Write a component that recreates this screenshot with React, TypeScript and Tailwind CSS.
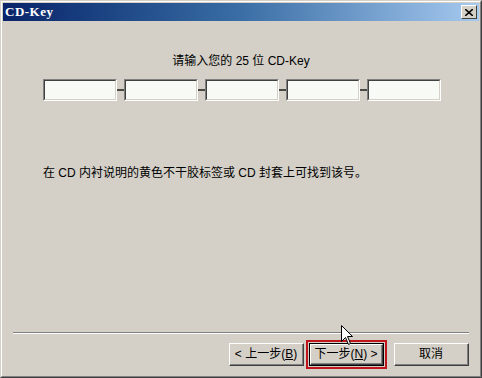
import React from "react";

const cjk = {
  fontFamily: '"Liberation Sans", "Noto Sans CJK SC", sans-serif',
};

const KeyBox = () => (
  <div className="w-[74px] h-[22px] border-t border-l border-[#808080] border-b border-r border-b-[#ffffff] border-r-[#ffffff]">
    <div className="w-full h-full border-t border-l border-[#404040] border-b border-r border-b-[#d4d0c8] border-r-[#d4d0c8] bg-[#f8faf6]" />
  </div>
);

const Dash = () => (
  <div className="w-[7px] flex items-center">
    <div className="w-full h-[2px] bg-[#4a4a44]" />
  </div>
);

type BtnProps = {
  children: React.ReactNode;
  isDefault?: boolean;
};

const Btn = ({ children, isDefault }: BtnProps) => (
  <div
    className={
      "w-[75px] h-[23px] " +
      (isDefault ? "border border-black" : "")
    }
  >
    <div className="w-full h-full border-t border-l border-white border-b border-r border-b-[#404040] border-r-[#404040] bg-[#d4d0c8]">
      <div
        className="w-full h-full border-b border-r border-[#808080] flex items-center justify-center text-[12px] text-black"
        style={cjk}
      >
        {children}
      </div>
    </div>
  </div>
);

const Cursor = () => (
  <svg
    className="absolute left-[340px] top-[324px]"
    width="13"
    height="21"
    viewBox="0 0 13 21"
  >
    <path
      d="M0.5 0.5 L0.5 16.5 L4.5 12.5 L7.5 19.5 L9.5 18.5 L6.5 11.5 L11.5 11.5 Z"
      fill="#ffffff"
      stroke="#000000"
      strokeWidth="1"
    />
  </svg>
);

export default function App() {
  return (
    <div className="relative w-[482px] h-[378px] bg-[#d4d0c8] border-t border-l border-[#d4d0c8] border-b border-r border-b-[#404040] border-r-[#404040]">
      <div className="w-full h-full border-t border-l border-white border-b border-r border-b-[#808080] border-r-[#808080] flex flex-col px-[1px] pt-[1px]">
        {/* title bar */}
        <div className="h-[18px] flex items-center justify-between pl-[2px] pr-[2px] bg-gradient-to-r from-[#0a246a] via-[#3a6ea5] to-[#a6caf0]">
          <span
            className="text-white font-bold text-[13px] tracking-[0.5px]"
            style={{ fontFamily: '"Liberation Serif", serif' }}
          >
            CD-Key
          </span>
          <div className="w-[16px] h-[14px] bg-[#d4d0c8] border-t border-l border-white border-b border-r border-b-[#404040] border-r-[#404040] flex items-center justify-center">
            <svg width="8" height="7" viewBox="0 0 8 7">
              <path d="M0 0 L8 7 M8 0 L0 7" stroke="#000" strokeWidth="1.6" />
            </svg>
          </div>
        </div>

        {/* body */}
        <div className="flex-1 flex flex-col">
          <div className="mt-[33px] text-center text-[12px] text-black leading-[14px]" style={cjk}>
            请输入您的 25 位 CD-Key
          </div>
          <div className="mt-[11px] ml-[40px] flex">
            <KeyBox />
            <Dash />
            <KeyBox />
            <Dash />
            <KeyBox />
            <Dash />
            <KeyBox />
            <Dash />
            <KeyBox />
          </div>
          <div className="mt-[65px] ml-[40px] text-[12px] text-black leading-[14px]" style={cjk}>
            在 CD 内衬说明的黄色不干胶标签或 CD 封套上可找到该号。
          </div>

          <div className="mt-auto">
            <div className="mx-[10px] h-[2px] border-t border-[#808080] border-b border-b-white" />
            <div className="flex justify-end items-center pr-[10px] pt-[6px] pb-[7px]">
              <Btn>
                <span>&lt; 上一步(<u>B</u>)</span>
              </Btn>
              <div className="ml-[2px] border-2 border-[#c0141c] p-[1px]">
                <Btn isDefault>
                  <span>下一步(<u>N</u>) &gt;</span>
                </Btn>
              </div>
              <div className="ml-[7px]">
                <Btn>取消</Btn>
              </div>
            </div>
          </div>
        </div>
      </div>
      <Cursor />
    </div>
  );
}
